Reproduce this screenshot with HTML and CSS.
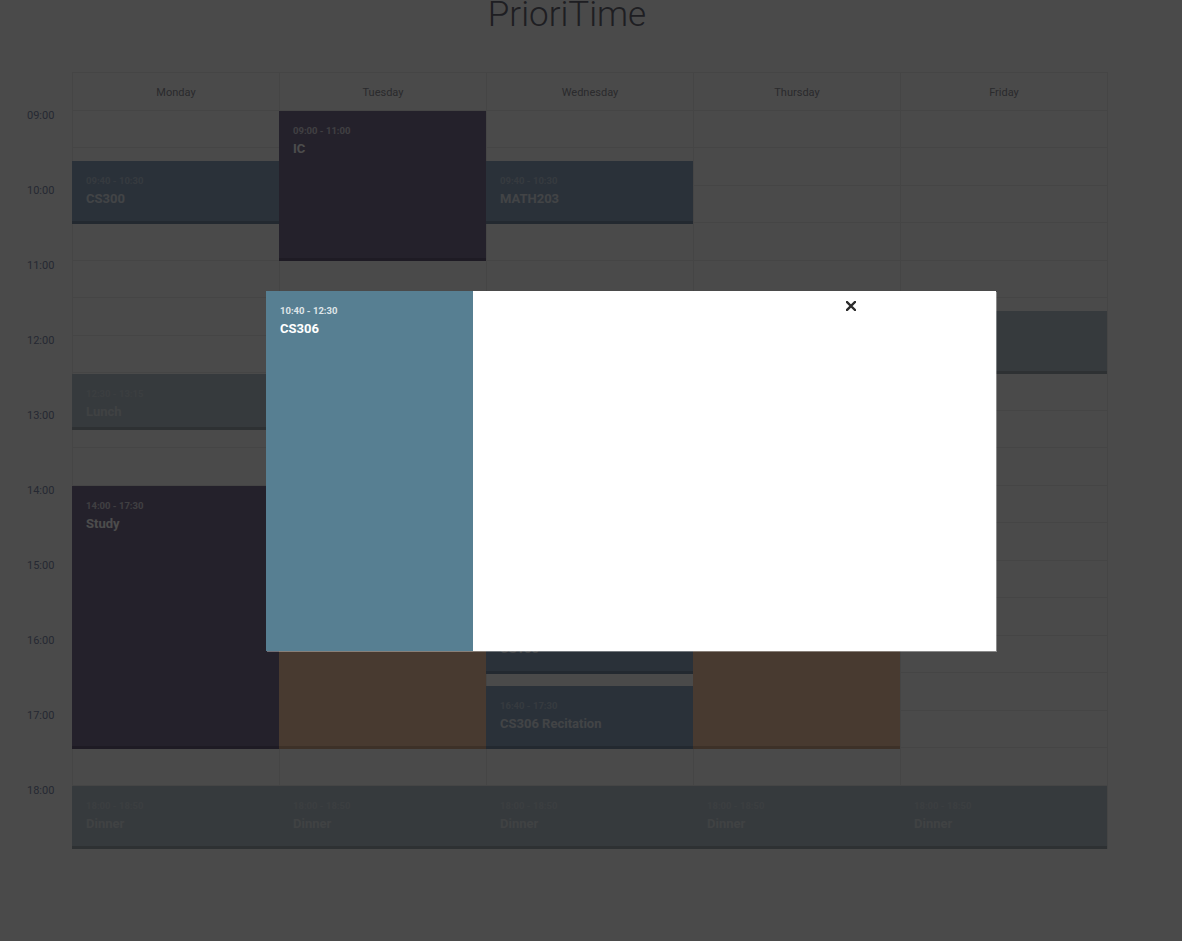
FILE: index.html
```html
<!DOCTYPE html>
<html lang="en">
<head>
  <meta charset="UTF-8" />
  <meta name="viewport" content="width=device-width, initial-scale=1" />
  <title>PrioriTime</title>
  <link rel="stylesheet" href="styles.css">
</head>
<body>
  <div class="page">
    <h1 class="title">PrioriTime</h1>

    <div class="schedule">
      <ul class="timeline">
        <li>09:00</li>
        <li>10:00</li>
        <li>11:00</li>
        <li>12:00</li>
        <li>13:00</li>
        <li>14:00</li>
        <li>15:00</li>
        <li>16:00</li>
        <li>17:00</li>
        <li>18:00</li>
      </ul>

      <div class="days">
        <div class="day">
          <div class="day-name">Monday</div>
          <div class="day-events">
            <a class="event event-blue" style="top:50px;height:62.5px">
              <span class="event-time">09:40 - 10:30</span>
              <em class="event-name">CS300</em>
            </a>
            <a class="event event-gray" style="top:262.5px;height:56.25px">
              <span class="event-time">12:30 - 13:15</span>
              <em class="event-name">Lunch</em>
            </a>
            <a class="event event-purple" style="top:375px;height:262.5px">
              <span class="event-time">14:00 - 17:30</span>
              <em class="event-name">Study</em>
            </a>
            <a class="event event-gray" style="top:675px;height:62.5px">
              <span class="event-time">18:00 - 18:50</span>
              <em class="event-name">Dinner</em>
            </a>
          </div>
        </div>

        <div class="day">
          <div class="day-name">Tuesday</div>
          <div class="day-events">
            <a class="event event-purple" style="top:0;height:150px">
              <span class="event-time">09:00 - 11:00</span>
              <em class="event-name">IC</em>
            </a>
            <a class="event event-blue is-selected" style="top:125px;height:137.5px">
              <span class="event-time">10:40 - 12:30</span>
              <em class="event-name">CS306</em>
            </a>
            <a class="event event-brown" style="top:375px;height:262.5px">
              <span class="event-time">14:00 - 17:30</span>
              <em class="event-name">Project</em>
            </a>
            <a class="event event-gray" style="top:675px;height:62.5px">
              <span class="event-time">18:00 - 18:50</span>
              <em class="event-name">Dinner</em>
            </a>
          </div>
        </div>

        <div class="day">
          <div class="day-name">Wednesday</div>
          <div class="day-events">
            <a class="event event-blue" style="top:50px;height:62.5px">
              <span class="event-time">09:40 - 10:30</span>
              <em class="event-name">MATH203</em>
            </a>
            <a class="event event-blue" style="top:500px;height:62.5px">
              <span class="event-time">15:40 - 16:30</span>
              <em class="event-name">CS100</em>
            </a>
            <a class="event event-blue" style="top:575px;height:62.5px">
              <span class="event-time">16:40 - 17:30</span>
              <em class="event-name">CS306 Recitation</em>
            </a>
            <a class="event event-gray" style="top:675px;height:62.5px">
              <span class="event-time">18:00 - 18:50</span>
              <em class="event-name">Dinner</em>
            </a>
          </div>
        </div>

        <div class="day">
          <div class="day-name">Thursday</div>
          <div class="day-events">
            <a class="event event-brown" style="top:300px;height:337.5px">
              <span class="event-time">13:00 - 17:30</span>
              <em class="event-name">Project</em>
            </a>
            <a class="event event-gray" style="top:675px;height:62.5px">
              <span class="event-time">18:00 - 18:50</span>
              <em class="event-name">Dinner</em>
            </a>
          </div>
        </div>

        <div class="day">
          <div class="day-name">Friday</div>
          <div class="day-events">
            <a class="event event-gray" style="top:200px;height:62.5px">
              <span class="event-time">11:40 - 12:30</span>
              <em class="event-name">Lunch</em>
            </a>
            <a class="event event-gray" style="top:675px;height:62.5px">
              <span class="event-time">18:00 - 18:50</span>
              <em class="event-name">Dinner</em>
            </a>
          </div>
        </div>
      </div>
    </div>
  </div>

  <div class="cover"></div>

  <div class="modal">
    <div class="modal-head">
      <span class="event-time">10:40 - 12:30</span>
      <em class="event-name">CS306</em>
    </div>
    <div class="modal-body">
      <a class="close" href="#" aria-label="Close">
        <svg width="10" height="10" viewBox="0 0 10 10">
          <path d="M1 1 L9 9 M9 1 L1 9" stroke="#2b2b2b" stroke-width="2.4" stroke-linecap="square" fill="none" />
        </svg>
      </a>
    </div>
  </div>
</body>
</html>
```

FILE: styles.css
```css
* {
  box-sizing: border-box;
}
body {
  margin: 0;
  font-family: Roboto, 'Liberation Sans', sans-serif;
  background: #f8f8f8;
  color: #666672;
}
ul {
  margin: 0;
  padding: 0;
  list-style: none;
}
.page {
  width: 1134px;
}
.title {
  margin: 0;
  font-size: 35px;
  line-height: 30px;
  font-weight: 300;
  text-align: center;
  color: #666672;
}
.schedule {
  display: flex;
  align-items: flex-start;
  margin-top: 42px;
}
.timeline {
  width: 72px;
  padding-top: 37px;
}
.timeline li {
  height: 75px;
  padding-left: 27px;
  font-size: 11px;
  line-height: 13px;
  color: #7f8aa8;
}
.days {
  display: grid;
  grid-template-columns: repeat(5, 207px);
  border-top: 1px solid #e6e6e8;
  border-right: 1px solid #e6e6e8;
}
.day {
  border-left: 1px solid #e6e6e8;
}
.day-name {
  height: 38px;
  line-height: 40px;
  overflow: hidden;
  text-align: center;
  font-size: 11px;
  color: #8f8f96;
  border-bottom: 1px solid #e6e6e8;
}
.day-events {
  position: relative;
  height: 737.5px;
  background: repeating-linear-gradient(to bottom, transparent 0, transparent 36.5px, #e6e6e8 36.5px, #e6e6e8 37.5px);
}
.event {
  position: absolute;
  left: -1px;
  right: 0;
  display: block;
  padding: 14px;
  color: #fff;
  text-decoration: none;
  box-shadow: inset 0 -3px 0 rgba(0, 0, 0, 0.15);
}
.event.is-selected {
  visibility: hidden;
}
.event-blue { background: #8ca3be; }
.event-purple { background: #786e8f; }
.event-gray { background: #b4c1cb; }
.event-brown { background: #f0c1a0; }
.event-time {
  display: block;
  font-size: 9.5px;
  line-height: 12px;
  font-weight: 700;
  opacity: 0.7;
}
.event-name {
  display: block;
  margin-top: 4px;
  font-size: 13px;
  line-height: 16px;
  font-style: normal;
  font-weight: 700;
}
.event-blue .event-name { opacity: 0.7; }
.event-blue .event-time { opacity: 0.35; }
.event-gray .event-name { opacity: 0.45; }
.event-gray .event-time { opacity: 0.25; }
.cover {
  position: fixed;
  inset: 0;
  background: rgba(0, 0, 0, 0.7);
  z-index: 2;
}
.modal {
  position: fixed;
  left: 266px;
  top: 291px;
  width: 730px;
  height: 360px;
  display: flex;
  z-index: 3;
  box-shadow: 1px 1px 0 rgba(255, 255, 255, 0.35);
}
.modal-head {
  width: 207px;
  padding: 14px;
  background: #577f92;
  color: #fff;
}
.modal-head .event-time {
  opacity: 0.8;
}
.modal-head .event-name {
  opacity: 1;
}
.modal-body {
  position: relative;
  flex: 1;
  background: #fff;
}
.close {
  position: absolute;
  top: 10px;
  left: 373px;
  width: 10px;
  height: 10px;
  display: block;
}
.close svg {
  display: block;
}
```
